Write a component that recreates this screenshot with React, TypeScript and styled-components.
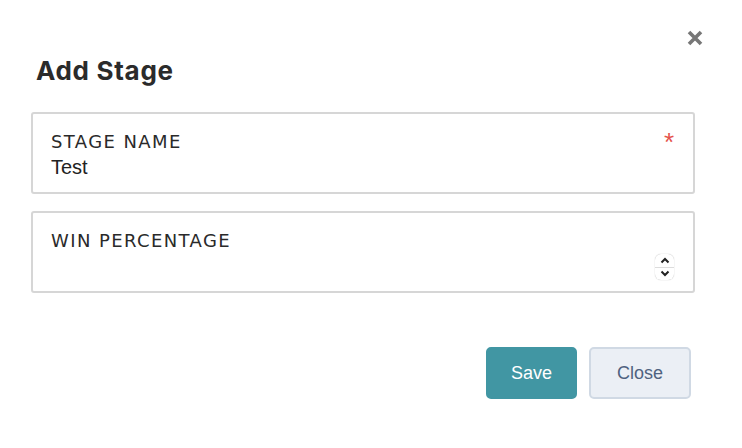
import styled, { createGlobalStyle } from "styled-components";

const Global = createGlobalStyle`
  html, body {
    margin: 0;
    padding: 0;
    background: #ffffff;
  }
  * {
    box-sizing: border-box;
  }
`;

const Modal = styled.div`
  position: relative;
  width: 742px;
  height: 448px;
  background: #ffffff;
  padding: 53px 47px 0 31px;
  font-family: "Liberation Sans", Arial, sans-serif;
`;

const CloseX = styled.button`
  position: absolute;
  top: 27px;
  right: 36px;
  width: 22px;
  height: 22px;
  padding: 0;
  border: none;
  background: transparent;
  display: flex;
  align-items: center;
  justify-content: center;
`;

const Title = styled.h2`
  margin: 0 0 23px 5px;
  font-family: Inter, "Liberation Sans", sans-serif;
  font-weight: 700;
  font-size: 26px;
  letter-spacing: 0.7px;
  line-height: 36px;
  color: #2b2b2b;
`;

const Fields = styled.div`
  display: flex;
  flex-direction: column;
  gap: 17px;
`;

const Field = styled.label`
  position: relative;
  display: flex;
  flex-direction: column;
  height: 82px;
  padding: 17px 18px 0 18px;
  border: 2px solid #d6d6d6;
  border-radius: 3px;
`;

const Label = styled.span`
  font-family: "DejaVu Sans", "Liberation Sans", sans-serif;
  font-size: 18px;
  letter-spacing: 1.4px;
  line-height: 22px;
  color: #2a2a2a;
`;

const Required = styled.span`
  position: absolute;
  top: 15px;
  right: 19px;
  color: #e5534b;
  font-size: 26px;
  line-height: 26px;
`;

const Input = styled.input`
  border: none;
  outline: none;
  padding: 0;
  margin-top: 2px;
  font-family: "Liberation Sans", Arial, sans-serif;
  font-size: 20px;
  line-height: 24px;
  color: #222222;
  background: transparent;
  width: 100%;
  &::-webkit-inner-spin-button,
  &::-webkit-outer-spin-button {
    -webkit-appearance: none;
    margin: 0;
  }
`;

const Spinner = styled.div`
  position: absolute;
  right: 19px;
  top: 41px;
  width: 19px;
  height: 26px;
  border-radius: 6px;
  background: #ffffff;
  box-shadow: 0 0 1px rgba(0, 0, 0, 0.35);
  display: flex;
  flex-direction: column;
  align-items: center;
  justify-content: space-between;
  padding: 3px 0;
`;

const SpinDivider = styled.div`
  width: 100%;
  height: 1px;
  background: #dcdcdc;
`;

const Footer = styled.div`
  display: flex;
  justify-content: flex-end;
  gap: 12px;
  margin-top: 54px;
  padding-right: 4px;
`;

const Button = styled.button<{ $primary?: boolean }>`
  height: 52px;
  padding: 0 ${(p) => (p.$primary ? "23px" : "26px")};
  min-width: ${(p) => (p.$primary ? "91px" : "102px")};
  border-radius: 5px;
  font-family: "Liberation Sans", Arial, sans-serif;
  font-size: 18px;
  border: 2px solid ${(p) => (p.$primary ? "#4196a3" : "#d0d9e4")};
  background: ${(p) => (p.$primary ? "#4196a3" : "#ebeff5")};
  color: ${(p) => (p.$primary ? "#ffffff" : "#4f6280")};
`;

export default function App() {
  return (
    <Modal>
      <Global />
      <CloseX aria-label="Close">
        <svg width="18" height="18" viewBox="0 0 18 18">
          <path
            d="M3 3 L15 15 M15 3 L3 15"
            stroke="#777777"
            strokeWidth="3.6"
            strokeLinecap="butt"
          />
        </svg>
      </CloseX>
      <Title>Add Stage</Title>
      <Fields>
        <Field>
          <Label>STAGE NAME</Label>
          <Required>*</Required>
          <Input type="text" defaultValue="Test" />
        </Field>
        <Field>
          <Label>WIN PERCENTAGE</Label>
          <Input type="number" />
          <Spinner>
            <svg width="10" height="7" viewBox="0 0 10 7">
              <path d="M1.5 5.5 L5 2 L8.5 5.5" fill="none" stroke="#222" strokeWidth="2" />
            </svg>
            <SpinDivider />
            <svg width="10" height="7" viewBox="0 0 10 7">
              <path d="M1.5 1.5 L5 5 L8.5 1.5" fill="none" stroke="#222" strokeWidth="2" />
            </svg>
          </Spinner>
        </Field>
      </Fields>
      <Footer>
        <Button $primary>Save</Button>
        <Button>Close</Button>
      </Footer>
    </Modal>
  );
}
